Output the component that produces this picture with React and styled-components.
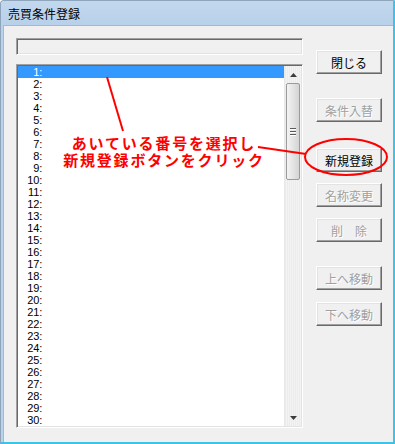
import React from 'react';
import styled, { createGlobalStyle } from 'styled-components';

const GlobalStyle = createGlobalStyle`
	html, body {
		margin: 0;
		padding: 0;
		background: #ffffff;
	}
	body {
		font-family: "Noto Sans CJK JP", "Liberation Sans", sans-serif;
		font-size: 12px;
	}
`

const BUTTONS = [
	{ label: '閉じる', enabled: true, gap: 0 },
	{ label: '条件入替', enabled: false, gap: 24 },
	{ label: '新規登録', enabled: true, gap: 26 },
	{ label: '名称変更', enabled: false, gap: 11 },
	{ label: '削　除', enabled: false, gap: 11 },
	{ label: '上へ移動', enabled: false, gap: 24 },
	{ label: '下へ移動', enabled: false, gap: 12 },
]

const ROWS = Array.from({ length: 30 }, (_, i) => i + 1)

const App = () => {
	return (
		<>
			<GlobalStyle />
			<Window>
				<TitleBar>売買条件登録</TitleBar>
				<Body>
					<LeftCol>
						<StatusBox />
						<ListBox>
							<ListRows>
								{ROWS.map(n => (
									<Row key={n} selected={n === 1}>
										<Num>{n}:</Num>
									</Row>
								))}
							</ListRows>
							<ScrollBar>
								<Arrow>
									<svg width="7" height="4" viewBox="0 0 7 4">
										<path d="M3.5 0 L7 4 L0 4 Z" fill="#3c3c3c" />
									</svg>
								</Arrow>
								<Thumb>
									<Grip />
									<Grip />
									<Grip />
								</Thumb>
								<Track />
								<Arrow>
									<svg width="7" height="4" viewBox="0 0 7 4">
										<path d="M0 0 L7 0 L3.5 4 Z" fill="#3c3c3c" />
									</svg>
								</Arrow>
							</ScrollBar>
						</ListBox>
					</LeftCol>
					<RightCol>
						{BUTTONS.map(b => (
							<Button key={b.label} enabled={b.enabled} gap={b.gap}>
								{b.label}
							</Button>
						))}
					</RightCol>
				</Body>
				<Note>
					<NoteLine>あいている番号を選択し</NoteLine>
					<NoteLine>新規登録ボタンをクリック</NoteLine>
				</Note>
				<Marks width="395" height="444" viewBox="0 0 395 444">
					<line x1="107" y1="77" x2="123" y2="131" stroke="#ff0000" strokeWidth="2" />
					<line x1="258" y1="147" x2="306" y2="154" stroke="#ff0000" strokeWidth="2" />
					<ellipse cx="346" cy="157" rx="41" ry="18" fill="none" stroke="#ff0000" strokeWidth="2" />
				</Marks>
			</Window>
		</>
	);
}

const Window = styled.div`
	position: relative;
	box-sizing: border-box;
	width: 395px;
	height: 444px;
	display: flex;
	flex-direction: column;
	background: #bad2ea;
	border-left: 1px solid #8ea4bb;
	border-top: 1px solid #8ea4bb;
	border-right: 2px solid #3cc3e6;
	border-bottom: 2px solid #3cc3e6;
	border-top-left-radius: 4px;
	overflow: hidden;
`

const TitleBar = styled.div`
	height: 24px;
	padding-left: 7px;
	display: flex;
	align-items: center;
	font-size: 12px;
	color: #000;
	background: linear-gradient(to bottom, #c2d8ee, #b8d0e9);
`

const Body = styled.div`
	flex: 1;
	display: flex;
	gap: 13px;
	margin-left: 2px;
	padding: 12px 0 0 12px;
	background: #f0f0f0;
	border-left: 1px solid #a9b8c8;
	border-top: 1px solid #a9b8c8;
`

const LeftCol = styled.div`
	width: 287px;
	display: flex;
	flex-direction: column;
`

const StatusBox = styled.div`
	box-sizing: border-box;
	height: 17px;
	margin-bottom: 9px;
	background: #f0f0f0;
	border: 1px solid;
	border-color: #a0a0a0 #ffffff #ffffff #a0a0a0;
	box-shadow: inset 1px 1px 0 #696969, inset -1px -1px 0 #e3e3e3;
`

const ListBox = styled.div`
	box-sizing: border-box;
	height: 364px;
	display: flex;
	background: #ffffff;
	border: 1px solid;
	border-color: #a0a0a0 #ffffff #ffffff #a0a0a0;
	box-shadow: inset 1px 1px 0 #696969, inset -1px -1px 0 #e3e3e3;
	padding: 1px;
`

const ListRows = styled.div`
	flex: 1;
	overflow: hidden;
`

const Row = styled.div`
	height: 12px;
	display: flex;
	align-items: center;
	background: ${p => (p.selected ? '#3399ff' : 'transparent')};
	color: ${p => (p.selected ? '#ffffff' : '#000000')};
`

const Num = styled.span`
	width: 24px;
	text-align: right;
	font-family: "Liberation Sans", sans-serif;
	font-size: 11px;
	line-height: 12px;
	letter-spacing: -0.2px;
`

const ScrollBar = styled.div`
	width: 16px;
	display: flex;
	flex-direction: column;
	background: repeating-linear-gradient(90deg, #ececec 0 1px, #f3f3f3 1px 2px);
	border-left: 1px solid #e8e8e8;
`

const Arrow = styled.div`
	height: 17px;
	display: flex;
	align-items: center;
	justify-content: center;
`

const Thumb = styled.div`
	box-sizing: border-box;
	height: 97px;
	margin: 0 1px;
	display: flex;
	flex-direction: column;
	align-items: center;
	justify-content: center;
	gap: 1px;
	border: 1px solid #9b9b9b;
	border-radius: 2px;
	background: linear-gradient(to right, #f4f4f4, #e2e2e2 55%, #d4d4d4);
`

const Grip = styled.div`
	width: 6px;
	height: 1px;
	background: #5a5a5a;
	box-shadow: 0 1px 0 #ffffff;
	margin-bottom: 1px;
`

const Track = styled.div`
	flex: 1;
`

const RightCol = styled.div`
	display: flex;
	flex-direction: column;
	padding-top: 12px;
`

const Button = styled.div`
	box-sizing: border-box;
	width: 66px;
	height: 24px;
	margin-top: ${p => p.gap}px;
	display: flex;
	align-items: center;
	justify-content: center;
	font-size: 12px;
	background: #f0f0f0;
	border: 1px solid;
	border-color: #ffffff #696969 #696969 #ffffff;
	box-shadow: inset -1px -1px 0 #a0a0a0, inset 1px 1px 0 #e3e3e3;
	color: ${p => (p.enabled ? '#000000' : '#a0a0a0')};
	text-shadow: ${p => (p.enabled ? 'none' : '1px 1px 0 #ffffff')};
`

const Note = styled.div`
	position: absolute;
	left: 0;
	top: 133px;
	width: 326px;
	display: flex;
	flex-direction: column;
	align-items: center;
	color: #ff0000;
	pointer-events: none;
`

const NoteLine = styled.div`
	height: 17px;
	font-size: 15px;
	line-height: 17px;
	font-weight: bold;
	letter-spacing: 1.8px;
	white-space: nowrap;
`

const Marks = styled.svg`
	position: absolute;
	left: -1px;
	top: -1px;
	pointer-events: none;
`

export default App;
